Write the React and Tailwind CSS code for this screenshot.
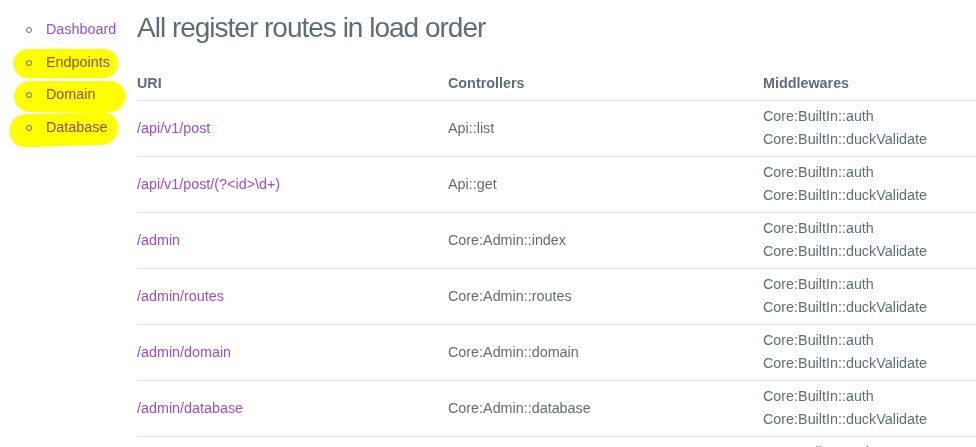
import React from 'react';

const NAV = ["Dashboard", "Endpoints", "Domain", "Database"];

const ROUTES = [
  { uri: "/api/v1/post", ctrl: "Api::list" },
  { uri: "/api/v1/post/(?<id>\\d+)", ctrl: "Api::get" },
  { uri: "/admin", ctrl: "Core:Admin::index" },
  { uri: "/admin/routes", ctrl: "Core:Admin::routes" },
  { uri: "/admin/domain", ctrl: "Core:Admin::domain" },
  { uri: "/admin/database", ctrl: "Core:Admin::database" },
  { uri: "/admin/endpoints", ctrl: "Core:Admin::endpoints" },
];

export default function App() {
  return (
    <div className="relative flex min-h-screen bg-white text-[#606c76] text-[14.35px] overflow-hidden" style={{ fontFamily: '"Liberation Sans", Arial, sans-serif' }}>
      {/* marker highlights over the nav */}
      <span className="absolute left-[13px] top-[49px] w-[105px] h-[29px] rounded-full bg-[#ffff00] mix-blend-multiply pointer-events-none z-10" />
      <span className="absolute left-[14px] top-[81px] w-[111px] h-[31px] rounded-full bg-[#ffff00] mix-blend-multiply pointer-events-none z-10" />
      <span className="absolute left-[9px] top-[113px] w-[109px] h-[33px] rounded-full bg-[#ffff00] mix-blend-multiply pointer-events-none z-10 -rotate-2" />

      <aside className="w-[137px] shrink-0">
        <ul className="pt-[14px]">
          {NAV.map((item) => (
            <li key={item} className="h-[32.5px] flex items-center">
              <span className="ml-[26px] w-[6px] h-[6px] rounded-full border border-[#606c76]" />
              <a href="#" className="ml-[14px] text-[#9b4dca]">{item}</a>
            </li>
          ))}
        </ul>
      </aside>

      <main className="flex-1 pt-[11px]">
        <h1 className="text-[28px] leading-[34px] tracking-[-1px] text-[#606c76]">All register routes in load order</h1>
        <table className="w-full mt-[27px] border-collapse text-left leading-[23px]">
          <thead>
            <tr className="border-b border-[#e1e1e1]">
              <th className="w-[296px] pr-[15px] pb-[5px] font-bold">URI</th>
              <th className="w-[315px] px-[15px] pb-[5px] font-bold">Controllers</th>
              <th className="px-[15px] pb-[5px] font-bold">Middlewares</th>
            </tr>
          </thead>
          <tbody>
            {ROUTES.map((r) => (
              <tr key={r.uri} className="border-b border-[#e1e1e1]">
                <td className="pr-[15px] pt-[4px] pb-[5px] align-middle">
                  <a href="#" className="text-[#9b4dca]">{r.uri}</a>
                </td>
                <td className="px-[15px] pt-[4px] pb-[5px] align-middle">{r.ctrl}</td>
                <td className="px-[15px] pt-[4px] pb-[5px] align-middle">
                  <div>Core:BuiltIn::auth</div>
                  <div>Core:BuiltIn::duckValidate</div>
                </td>
              </tr>
            ))}
          </tbody>
        </table>
      </main>
    </div>
  );
}
